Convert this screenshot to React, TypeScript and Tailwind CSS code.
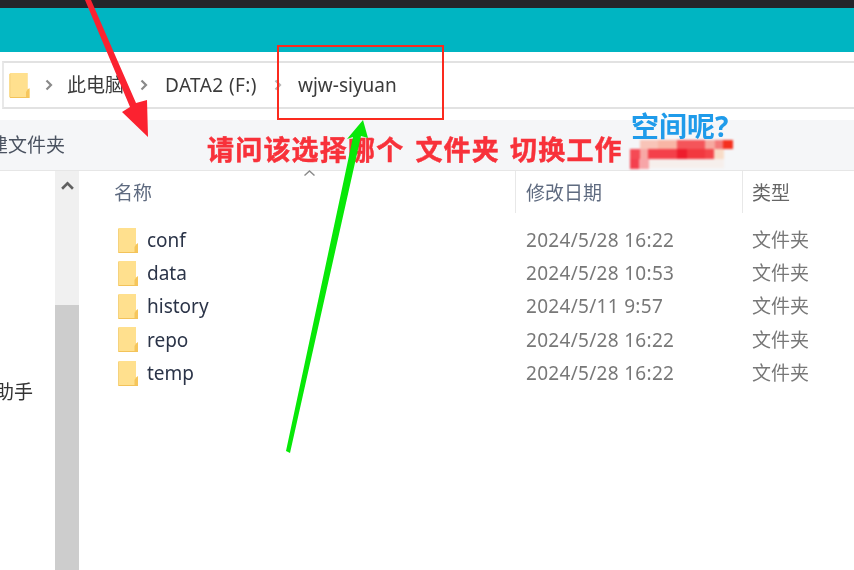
const font = {
  fontFamily: '"Noto Sans", "Noto Sans CJK SC", sans-serif',
};

type Item = {
  name: string;
  date: string;
};

const items: Item[] = [
  { name: 'conf', date: '2024/5/28 16:22' },
  { name: 'data', date: '2024/5/28 10:53' },
  { name: 'history', date: '2024/5/11 9:57' },
  { name: 'repo', date: '2024/5/28 16:22' },
  { name: 'temp', date: '2024/5/28 16:22' },
];

// pixels of the blurred-out word after the annotation: x, y, w, h, colour
const mosaic: [number, number, number, number, string][] = [
  [10, 0, 18, 9, '#f8c4b8'],
  [28, 0, 19, 9, '#f8b5a5'],
  [47, 0, 28, 9, '#f4555a'],
  [75, 0, 10, 9, '#f6a9a0'],
  [85, 0, 8, 9, '#f47a7a'],
  [93, 0, 10, 9, '#f5301f'],
  [0, 9, 10, 10, '#f54a55'],
  [10, 9, 8, 10, '#f7a8a5'],
  [18, 9, 29, 10, '#f4404a'],
  [47, 9, 10, 10, '#ee1c2c'],
  [57, 9, 18, 10, '#f2383f'],
  [75, 9, 9, 10, '#f4454a'],
  [84, 9, 10, 10, '#f8dcc8'],
  [0, 19, 9, 10, '#f4404f'],
  [9, 19, 10, 10, '#f7a5a8'],
  [19, 19, 75, 9, '#f6efec'],
];

function FolderIcon({ className }: { className: string }) {
  return (
    <svg viewBox="0 0 20 25" className={className}>
      <path d="M0 1.5 Q0 0 1.5 0 H18 V25 H1.5 Q0 25 0 23.5 Z" fill="#fcdc86" />
      <path d="M0 1.5 Q0 0 1.5 0 H18 V18 L20 16 V25 H1.5 Q0 25 0 23.5 Z" fill="#ffe08e" />
      <path d="M16.5 25 V19 L18 16.5 L20 15 V25 Z" fill="#f6c65c" />
      <path d="M0.5 24.5 H19.5" stroke="#f3c35a" strokeWidth="1" />
      <path d="M0.5 1 V24" stroke="#f5d27d" strokeWidth="1" />
    </svg>
  );
}

function Chevron({ className }: { className: string }) {
  return (
    <svg viewBox="0 0 8 12" className={className}>
      <path d="M1.5 1.5 L6 6 L1.5 10.5" fill="none" stroke="currentColor" strokeWidth="2.2" />
    </svg>
  );
}

export default function App() {
  return (
    <div
      className="relative flex h-[570px] w-[854px] flex-col overflow-hidden bg-white"
      style={font}
    >
      <div className="h-[8px] shrink-0 bg-[#24242a]" />
      <div className="h-[44px] shrink-0 bg-[#00b5c2]" />

      {/* address bar */}
      <div className="flex h-[68px] shrink-0 items-start bg-white pt-[9px] pl-[2px]">
        <div className="flex h-[48px] w-full items-center border-y-2 border-l-2 border-y-[#e2e2e2] border-l-[#e8e8e8] pl-[5px] text-[19px] text-[#3b3b3b] blur-[0.5px]">
          <FolderIcon className="h-[25px] w-[21px] shrink-0" />
          <Chevron className="ml-[15px] h-[12px] w-[8px] text-[#8a8a8a]" />
          <span className="ml-[14px] w-[57px] whitespace-nowrap">此电脑</span>
          <Chevron className="ml-[16px] h-[12px] w-[8px] text-[#8a8a8a]" />
          <span className="ml-[17px] w-[95px] whitespace-nowrap tracking-[0.4px]">DATA2 (F:)</span>
          <Chevron className="ml-[14px] h-[12px] w-[8px] text-[#b5b5b5]" />
          <span className="ml-[16px] whitespace-nowrap">wjw-siyuan</span>
        </div>
      </div>

      {/* toolbar */}
      <div className="flex h-[51px] shrink-0 items-center overflow-hidden border-b border-[#e6e6e6] bg-[#f5f6f8] blur-[0.5px]">
        <span className="ml-[-30px] whitespace-nowrap text-[19px] text-[#4a5260]">新建文件夹</span>
      </div>

      <div className="flex min-h-0 flex-1">
        {/* nav pane */}
        <div className="flex w-[55px] shrink-0 flex-col overflow-hidden pt-[208px]">
          <span className="ml-[-24px] whitespace-nowrap text-[19px] leading-[26px] text-[#333] blur-[0.5px]">小助手</span>
        </div>

        {/* scrollbar */}
        <div className="flex w-[24px] shrink-0 flex-col bg-[#f0f0f0]">
          <div className="flex h-[134px] shrink-0 justify-center pt-[10px]">
            <svg viewBox="0 0 12 8" className="h-[9px] w-[13px] text-[#606060]">
              <path d="M1 7 L6 2 L11 7" fill="none" stroke="currentColor" strokeWidth="2.4" />
            </svg>
          </div>
          <div className="flex-1 bg-[#cdcdcd]" />
        </div>

        {/* file list */}
        <div className="min-w-0 flex-1 text-[19px] blur-[0.5px]">
          <div className="relative flex h-[42px] text-[#5f6b80]">
            <div className="w-[436px] pt-[7px] pl-[35px] leading-[30px]">名称</div>
            <div className="w-[227px] border-l border-[#e8e8e8] pt-[7px] pl-[10px] leading-[30px]">修改日期</div>
            <div className="flex-1 border-l border-[#e8e8e8] pt-[7px] pl-[9px] leading-[30px] text-[#666]">类型</div>
            <svg viewBox="0 0 12 6" className="absolute top-[-1px] left-[224px] h-[6px] w-[13px] text-[#8a8a8a]">
              <path d="M1 5.5 L6 1 L11 5.5" fill="none" stroke="currentColor" strokeWidth="1.4" />
            </svg>
          </div>
          <div className="pt-[10.5px]">
            {items.map(item => (
              <div key={item.name} className="flex h-[33.25px] items-center">
                <div className="flex w-[436px] items-center pl-[39px] text-[#2b3448]">
                  <FolderIcon className="h-[25px] w-[20px] shrink-0" />
                  <span className="ml-[9px]">{item.name}</span>
                </div>
                <div className="w-[227px] pl-[11px] tracking-[0.3px] text-[#787878]">{item.date}</div>
                <div className="pl-[10px] text-[#787878]">文件夹</div>
              </div>
            ))}
          </div>
        </div>
      </div>

      {/* annotations drawn over the screenshot */}
      <div className="absolute top-[45px] left-[277px] h-[75px] w-[167px] border-2 border-[#fb2a1e]" />

      <svg viewBox="0 0 103 29" className="absolute top-[140px] left-[630px] h-[29px] w-[103px] blur-[0.8px]">
        {mosaic.map(([x, y, w, h, color]) => (
          <rect key={`${x}-${y}`} x={x} y={y} width={w} height={h} fill={color} />
        ))}
      </svg>

      <div className="absolute top-[133px] left-[207px] flex whitespace-nowrap text-[27px] leading-[34px] font-bold tracking-[1.2px] text-[#f8313a] blur-[0.5px] [-webkit-text-stroke:0.5px_#f8313a]">
        <span>请问该选择哪个</span>
        <span className="ml-[11px]">文件夹</span>
        <span className="ml-[10px]">切换工作</span>
      </div>

      <div className="absolute top-[108px] left-[631px] whitespace-nowrap text-[28px] leading-[36px] font-bold text-[#1f9bea] blur-[0.5px]">
        空间呢?
      </div>

      <svg viewBox="0 0 854 570" className="absolute inset-0 h-[570px] w-[854px] blur-[0.4px]">
        <path d="M85 0 L91 0 L136 103 L147 100 L148 137 L122 112 L130 107 Z" fill="#fb2230" />
        <path d="M286 451 L353 137 L347 139 L363 120 L368 138 L361 136 L290 453 Z" fill="#08e808" />
      </svg>
    </div>
  );
}
